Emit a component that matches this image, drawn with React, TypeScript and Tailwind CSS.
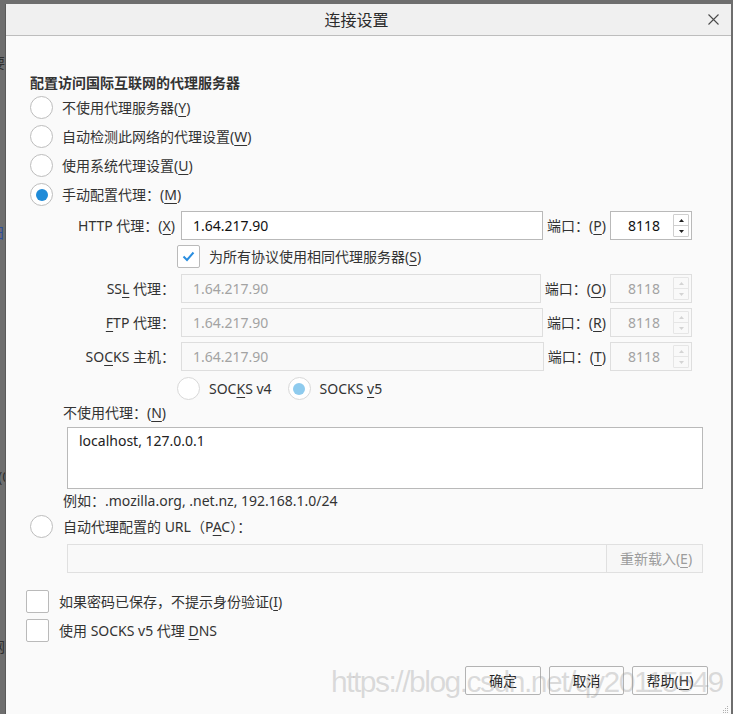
import React from "react";
import clsx from "clsx";

const font = "font-['Noto_Sans','Noto_Sans_CJK_SC',sans-serif]";

function Radio({ checked = false, disabled = false }: { checked?: boolean; disabled?: boolean }) {
  return (
    <span
      className={clsx(
        "flex h-[23px] w-[23px] shrink-0 items-center justify-center rounded-full border bg-white",
        disabled ? "border-[#d8d8d8]" : "border-[#bdbdbd]"
      )}
    >
      {checked && (
        <span className={clsx("h-[12px] w-[12px] rounded-full", disabled ? "bg-[#8ecbee]" : "bg-[#1f8bd8]")} />
      )}
    </span>
  );
}

function Checkbox({ checked = false }: { checked?: boolean }) {
  return (
    <span className="flex h-[23px] w-[23px] shrink-0 items-center justify-center rounded-[2px] border border-[#bababa] bg-white">
      {checked && (
        <svg width="13" height="11" viewBox="0 0 13 11">
          <path d="M1.5 5.5 L5 9 L11.5 1.5" fill="none" stroke="#2a8ee0" strokeWidth="2" />
        </svg>
      )}
    </span>
  );
}

function Spinner({ disabled = false }: { disabled?: boolean }) {
  const arrow = disabled ? "#d4d4d4" : "#222";
  return (
    <span
      className={clsx(
        "flex h-[23px] w-[16px] flex-col rounded-[1px] border",
        disabled ? "border-[#e6e6e6]" : "border-[#cfcfcf]"
      )}
    >
      <span
        className={clsx(
          "flex flex-1 items-center justify-center border-b",
          disabled ? "border-[#e6e6e6]" : "border-[#cfcfcf]"
        )}
      >
        <svg width="5" height="3" viewBox="0 0 5 3">
          <path d="M0 3 L2.5 0 L5 3 Z" fill={arrow} />
        </svg>
      </span>
      <span className="flex flex-1 items-center justify-center">
        <svg width="5" height="3" viewBox="0 0 5 3">
          <path d="M0 0 L2.5 3 L5 0 Z" fill={arrow} />
        </svg>
      </span>
    </span>
  );
}

function Key({ children }: { children: React.ReactNode }) {
  return <span className="underline decoration-1 underline-offset-[3px]">{children}</span>;
}

function ProxyRow({
  label,
  portKey,
  disabled = false,
  className,
}: {
  label: React.ReactNode;
  portKey: string;
  disabled?: boolean;
  className?: string;
}) {
  return (
    <div className={clsx("ml-[34px] mr-[16px] flex h-[29px] items-center", className)}>
      <span className="w-[116px] shrink-0 pr-[1px] text-right">{label}</span>
      <div
        className={clsx(
          "ml-[5px] flex h-[29px] flex-1 items-center border pl-[11px] text-[14px]",
          disabled ? "border-[#dedede] bg-[#f9f9f9] text-[#a3a3a3]" : "border-[#b9b9b9] bg-white text-[#111]"
        )}
      >
        1.64.217.90
      </div>
      <span className="ml-[4px] shrink-0">
        端口：(<Key>{portKey}</Key>)
      </span>
      <div
        className={clsx(
          "ml-[4px] flex h-[29px] w-[82px] shrink-0 items-center justify-between border pl-[17px] pr-[2px]",
          disabled ? "border-[#dedede] bg-[#f9f9f9] text-[#a3a3a3]" : "border-[#b9b9b9] bg-white text-[#111]"
        )}
      >
        <span>8118</span>
        <Spinner disabled={disabled} />
      </div>
    </div>
  );
}

export default function App() {
  return (
    <div className={clsx("relative flex h-[714px] w-[733px] overflow-hidden bg-[#6e6e6e] text-[14px] leading-[18px] text-[#333]", font)}>
      {/* page behind the dialog */}
      <div className="flex w-[5px] shrink-0 flex-col overflow-hidden pt-[54px] text-[14px] text-[#2e2e2e]">
        <span className="-ml-[9px] h-[170px]">要</span>
        <span className="-ml-[9px] h-[24px] text-[#2c4d9a]">日</span>
        <span className="-ml-[9px] h-[220px]">。</span>
        <span className="-ml-[2px] h-[170px]">(0</span>
        <span className="-ml-[9px]">网</span>
      </div>

      <div className="mt-[4px] flex w-[726px] shrink-0 flex-col border-l border-[#5a5a5a] bg-[#fafafa]">
        {/* title bar */}
        <div className="flex h-[32px] shrink-0 items-center border-b border-[#bdbdbd] bg-[#f0f0f0]">
          <span className="flex-1 pl-[10px] text-center text-[16px] text-[#2b2b2b]">连接设置</span>
          <span className="flex w-[34px] items-center justify-center pr-[2px]">
            <svg width="11" height="11" viewBox="0 0 11 11">
              <path d="M0.5 0.5 L10.5 10.5 M10.5 0.5 L0.5 10.5" stroke="#4a4a4a" strokeWidth="1.1" />
            </svg>
          </span>
        </div>

        {/* body */}
        <div className="flex flex-1 flex-col pl-[20px] pr-[23px] pt-[37px]">
          <div className="ml-[4px] flex h-[20px] items-center font-bold text-[#333]">配置访问国际互联网的代理服务器</div>

          {[
            { text: "不使用代理服务器(", key: "Y", end: ")" },
            { text: "自动检测此网络的代理设置(", key: "W", end: ")" },
            { text: "使用系统代理设置(", key: "U", end: ")" },
            { text: "手动配置代理：(", key: "M", end: ")", checked: true },
          ].map((r) => (
            <div key={r.key} className="ml-[4px] flex h-[29px] items-center gap-[9px]">
              <Radio checked={r.checked} />
              <span>
                {r.text}
                <Key>{r.key}</Key>
                {r.end}
              </span>
            </div>
          ))}

          <ProxyRow
            className="mt-[2px]"
            label={
              <>
                HTTP 代理：(<Key>X</Key>)
              </>
            }
            portKey="P"
          />

          <div className="ml-[151px] mt-[5px] flex h-[23px] items-center gap-[9px]">
            <Checkbox checked />
            <span>
              为所有协议使用相同代理服务器(<Key>S</Key>)
            </span>
          </div>

          <ProxyRow
            className="mt-[6px]"
            disabled
            label={
              <>
                SS<Key>L</Key> 代理：
              </>
            }
            portKey="O"
          />
          <ProxyRow
            className="mt-[5px]"
            disabled
            label={
              <>
                <Key>F</Key>TP 代理：
              </>
            }
            portKey="R"
          />
          <ProxyRow
            className="mt-[5px]"
            disabled
            label={
              <>
                SO<Key>C</Key>KS 主机：
              </>
            }
            portKey="T"
          />

          <div className="ml-[151px] mt-[6px] flex h-[23px] items-center">
            <Radio disabled />
            <span className="ml-[9px]">
              SOC<Key>K</Key>S v4
            </span>
            <span className="ml-[16px]">
              <Radio checked disabled />
            </span>
            <span className="ml-[9px]">
              SOCKS <Key>v</Key>5
            </span>
          </div>

          <div className="ml-[37px] mt-[4px] flex h-[18px] items-center">
            <span>
              不使用代理：(<Key>N</Key>)
            </span>
          </div>

          <div className="ml-[41px] mr-[5px] mt-[5px] h-[62px] border border-[#b9b9b9] bg-white pl-[11px] pt-[4px] text-[#222]">
            localhost, 127.0.0.1
          </div>

          <div className="ml-[37px] mt-[3px] flex h-[18px] items-center">例如：.mozilla.org, .net.nz, 192.168.1.0/24</div>

          <div className="ml-[4px] mt-[5px] flex h-[23px] items-center gap-[10px]">
            <Radio />
            <span>
              自动代理配置的 URL（P<Key>A</Key>C）：
            </span>
          </div>

          <div className="ml-[41px] mr-[5px] mt-[6px] flex h-[29px] border border-[#e0e0e0] bg-[#f9f9f9]">
            <div className="flex-1" />
            <div className="flex w-[96px] items-center justify-center border-l border-[#e0e0e0] bg-[#f7f7f7] pl-[3px] text-[#9c9c9c]">
              重新载入(<Key>E</Key>)
            </div>
          </div>

          <div className="mt-[17px] flex h-[23px] items-center gap-[10px]">
            <Checkbox />
            <span>
              如果密码已保存，不提示身份验证(<Key>I</Key>)
            </span>
          </div>
          <div className="mt-[6px] flex h-[23px] items-center gap-[10px]">
            <Checkbox />
            <span>
              使用 SOCKS v5 代理 <Key>D</Key>NS
            </span>
          </div>

          <div className="mt-[24px] flex justify-end gap-[8px]">
            <button className="flex h-[29px] w-[76px] items-center justify-center rounded-[2px] border border-[#b3b3b3] bg-[#fcfcfc] text-[#222]">
              确定
            </button>
            <button className="flex h-[29px] w-[75px] items-center justify-center rounded-[2px] border border-[#b3b3b3] bg-[#fcfcfc] text-[#222]">
              取消
            </button>
            <button className="flex h-[29px] w-[76px] items-center justify-center rounded-[2px] border border-[#b3b3b3] bg-[#fcfcfc] text-[#222]">
              帮助(<Key>H</Key>)
            </button>
          </div>

          {/* resize grip */}
          <div className="mr-[-21px] mt-auto flex justify-end pb-[1px]">
            <svg width="7" height="7" viewBox="0 0 7 7">
              <rect x="5" y="0" width="1" height="1" fill="#b0b0b0" />
              <rect x="3" y="2" width="1" height="1" fill="#b0b0b0" />
              <rect x="5" y="2" width="1" height="1" fill="#b0b0b0" />
              <rect x="1" y="4" width="1" height="1" fill="#b0b0b0" />
              <rect x="3" y="4" width="1" height="1" fill="#b0b0b0" />
              <rect x="5" y="4" width="1" height="1" fill="#b0b0b0" />
              <rect x="1" y="6" width="1" height="1" fill="#b0b0b0" />
              <rect x="3" y="6" width="1" height="1" fill="#b0b0b0" />
              <rect x="5" y="6" width="1" height="1" fill="#b0b0b0" />
            </svg>
          </div>
        </div>
      </div>

      <div className="w-[2px] shrink-0" />

      {/* watermark overlay */}
      <div className="pointer-events-none absolute left-[331px] top-[667px] font-['Liberation_Sans',sans-serif] text-[30px] leading-none tracking-[-1.5px] text-[#9a9a9a]/35">
        https://blog.csdn.net/qy20115549
      </div>
    </div>
  );
}
